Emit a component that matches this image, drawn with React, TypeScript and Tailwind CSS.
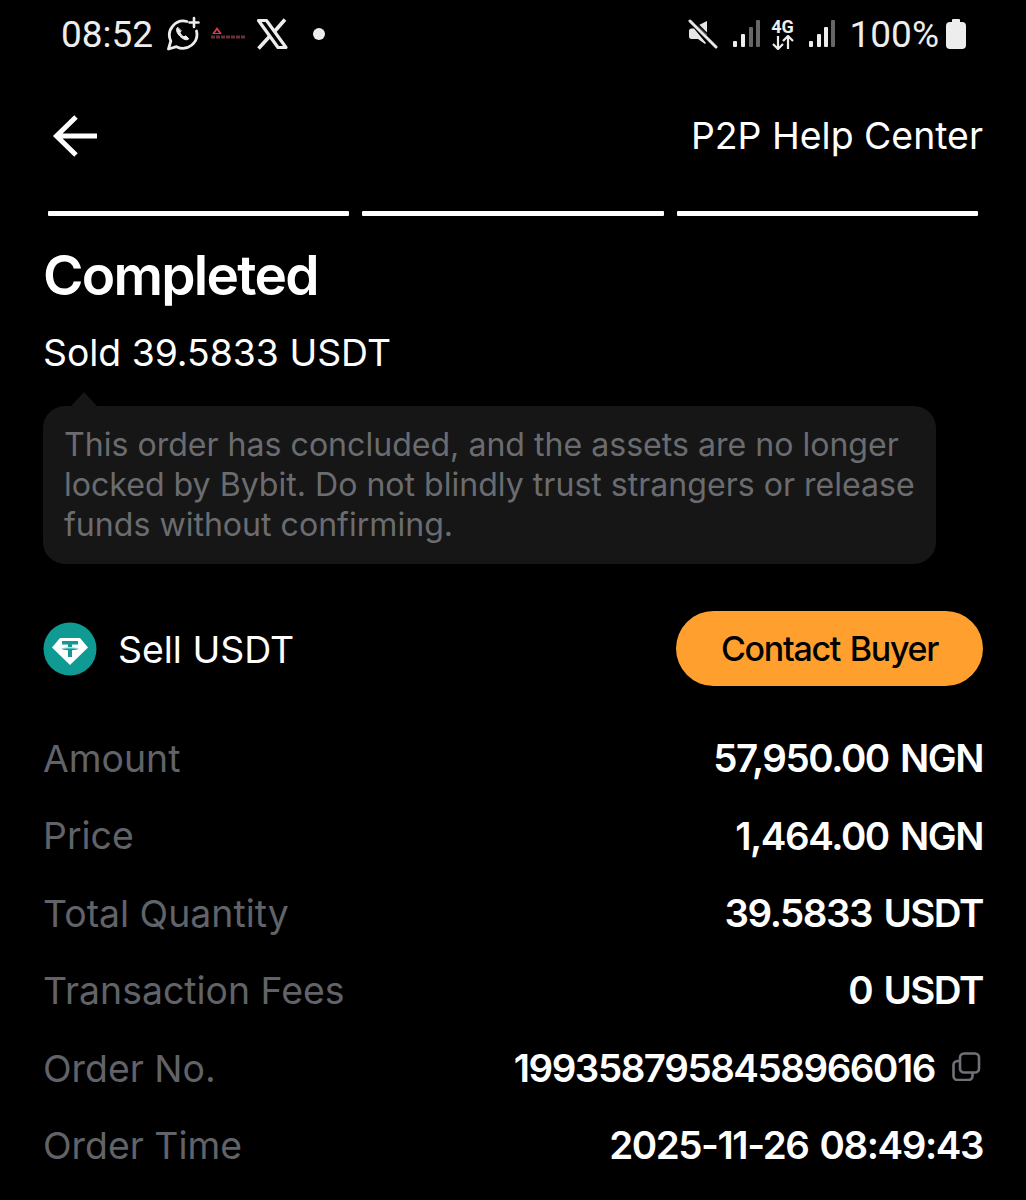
const rows = [
  { label: 'Amount', value: '57,950.00 NGN' },
  { label: 'Price', value: '1,464.00 NGN' },
  { label: 'Total Quantity', value: '39.5833 USDT' },
  { label: 'Transaction Fees', value: '0 USDT' },
  { label: 'Order No.', value: '1993587958458966016', copy: true },
  { label: 'Order Time', value: '2025-11-26 08:49:43' },
];

const WhatsAppIcon = () => (
  <svg width="36" height="36" viewBox="0 0 36 36" fill="none" stroke="#ededed" strokeWidth="2.8" strokeLinecap="round" strokeLinejoin="round">
    <path d="M22 5.500A14 14 0 0 0 5.800 25L3.500 33l8-2.300A14 14 0 0 0 31.500 15" />
    <path d="M12.500 11.500c-2 2-.8 5.500 2.500 8.800s6.800 4.500 8.800 2.500l-3-3-1.800 1c-1.500-.5-3.500-2.500-4-4l1-1.800z" fill="#ededed" strokeWidth="1" />
    <path d="M29 2v9M24.500 6.500h9" strokeWidth="2.600" />
  </svg>
);

const XIcon = () => (
  <svg width="34" height="32" viewBox="0 0 34 32" fill="none" stroke="#ededed" strokeLinejoin="round">
    <path d="M3.500 2.500h8l19.500 27h-8z" strokeWidth="3.200" />
    <path d="M30 1.500 19.500 13.500M14.500 18.500 3.500 30.500" strokeWidth="3.600" />
  </svg>
);

const MutedIcon = () => (
  <svg width="30" height="30" viewBox="0 0 30 30" fill="#e6e6e6">
    <path d="M1 12c0-1.500 1-2.500 2.500-2.500H6L18 24l-1 1-7-5H3.500C2 20 1 19 1 17.500z" />
    <path d="M19 2v14L10 6.500z" />
    <path d="M2 2l26 26" stroke="#e6e6e6" strokeWidth="3" strokeLinecap="round" />
    <path d="M4.500 0 30 25.500" stroke="#000" strokeWidth="1.500" />
  </svg>
);

const SignalIcon = () => (
  <svg width="28" height="30" viewBox="0 0 28 30">
    <rect x="1" y="22" width="4" height="6" rx="1" fill="#ededed" />
    <rect x="9" y="15" width="4" height="13" rx="1" fill="#ededed" />
    <rect x="17" y="8" width="4" height="20" rx="1" fill="#666" />
    <rect x="24" y="1" width="4" height="27" rx="1" fill="#666" />
  </svg>
);

const Signal2Icon = () => (
  <svg width="26" height="30" viewBox="0 0 26 30">
    <rect x="0" y="22" width="4" height="6" rx="1" fill="#ededed" />
    <rect x="8" y="15" width="4" height="13" rx="1" fill="#ededed" />
    <rect x="15" y="8" width="4" height="20" rx="1" fill="#ededed" />
    <rect x="22" y="1" width="4" height="27" rx="1" fill="#666" />
  </svg>
);

const BatteryIcon = () => (
  <svg width="22" height="30" viewBox="0 0 22 30" fill="#ededed">
    <rect x="7" y="0" width="8" height="4" rx="1" />
    <rect x="1" y="3" width="20" height="27" rx="4" />
  </svg>
);

const TetherIcon = () => (
  <svg width="54" height="54" viewBox="0 0 54 54">
    <circle cx="27" cy="27" r="26.500" fill="#0f9b93" />
    <path d="M17 16h20l8 9.500L27 43 9 25.500z" fill="#fff" />
    <path d="M19 19h16v3.500h-6v2.700c3 .1 5.500.6 7 1.500-1.500.9-4 1.400-7 1.500V35h-4v-6.800c-3-.1-5.500-.6-7-1.500 1.500-.9 4-1.400 7-1.500v-2.700h-6z" fill="#0f9b93" />
    <path d="M15 27c3-1.600 21-1.600 24 0" stroke="#fff" strokeWidth="1" fill="none" />
  </svg>
);

const CopyIcon = () => (
  <svg width="30" height="30" viewBox="0 0 30 30" fill="none" stroke="#6f7177" strokeWidth="2.600" strokeLinejoin="round">
    <rect x="9" y="2.500" width="19" height="19" rx="4" />
    <path d="M9 10H6.500a4 4 0 0 0-4 4v11a4 4 0 0 0 4 4h11a4 4 0 0 0 4-4v-3.500" />
  </svg>
);

export default function App() {
  return (
    <div className="w-[1026px] h-[1200px] overflow-hidden bg-black text-white font-['Inter',sans-serif]">
      {/* status bar */}
      <div className="flex items-center justify-between pl-[61px] pr-[59px] py-[5px] h-[68px]">
        <div className="flex items-center">
          <span className="text-[37px] leading-none text-[#ededed] font-['Roboto',sans-serif] w-[92px]">08:52</span>
          <span className="ml-[12px] flex"><WhatsAppIcon /></span>
          <span className="ml-[9px] mr-[9px] flex flex-col items-center w-[36px]">
            <svg width="36" height="16" viewBox="0 0 36 16">
              <path d="M7 1l5 7H2zM7 4l-2 3h4z" fill="#d8384a" fillRule="evenodd" />
              <path d="M1 11h34" stroke="#6a3038" strokeWidth="3" strokeDasharray="4 1" />
            </svg>
          </span>
          <XIcon />
          <span className="ml-[24px] w-[12px] h-[12px] rounded-full bg-[#ededed]" />
        </div>
        <div className="flex items-center">
          <MutedIcon />
          <span className="ml-[14px] flex"><SignalIcon /></span>
          <span className="ml-[9px] w-[28px] flex flex-col items-center">
            <span className="text-[18px] leading-[17px] font-bold text-[#ededed] font-['Roboto',sans-serif]">4G</span>
            <svg width="24" height="15" viewBox="0 0 24 15" fill="none" stroke="#ededed" strokeWidth="2.200">
              <path d="M7 1v13M2 9l5 5 5-5M17 14V1M12 6l5-5 5 5" />
            </svg>
          </span>
          <span className="ml-[12px] flex"><Signal2Icon /></span>
          <span className="ml-[15px] text-[37px] leading-none text-[#ededed] font-['Roboto',sans-serif]">100%</span>
          <span className="ml-[6px] flex"><BatteryIcon /></span>
        </div>
      </div>

      {/* header */}
      <div className="flex items-start justify-between h-[143px] pl-[52px] pr-[43px] pt-[45px]">
        <svg width="46" height="46" viewBox="0 0 46 46" fill="none" stroke="#fff" strokeWidth="5">
          <path d="M45 23H5M24 4 4.500 23 24 42" />
        </svg>
        <span className="text-[37.400px] leading-[46px]">P2P Help Center</span>
      </div>

      {/* progress */}
      <div className="flex gap-[13px] px-[48px]">
        <div className="w-[301px] h-[5px] bg-white rounded-[1px]" />
        <div className="w-[302px] h-[5px] bg-white rounded-[1px]" />
        <div className="w-[301px] h-[5px] bg-white rounded-[1px]" />
      </div>

      <div className="px-[43px]">
        <h1 className="mt-[28px] text-[55px] leading-[62px] font-semibold tracking-[-1.750px]">Completed</h1>
        <p className="mt-[25px] text-[37.300px] leading-[44px]">Sold 39.5833 USDT</p>

        <div className="relative mt-[31px] w-[893px] h-[158px] rounded-[22px] bg-[#161616] pl-[21px] pr-[20px] pt-[19px] text-[32.080px] leading-[40px] text-[#6b6c70]">
          <span className="absolute left-[28px] -top-[14px] w-0 h-0 border-l-[13px] border-r-[13px] border-b-[14px] border-l-transparent border-r-transparent border-b-[#161616]" />
          This order has concluded, and the assets are no longer locked by Bybit. Do not blindly trust strangers or release funds without confirming.
        </div>

        <div className="mt-[46px] flex items-center justify-between h-[76px]">
          <div className="flex items-center gap-[21px] pt-[2px]">
            <TetherIcon />
            <span className="text-[37.400px] leading-[46px] pt-[2px]">Sell USDT</span>
          </div>
          <button className="h-[75px] w-[307px] rounded-full bg-[#ffa02e] text-black text-[34px] font-medium tracking-[-1.300px] [word-spacing:2px]">Contact Buyer</button>
        </div>

        <div className="mt-[51px] flex flex-col gap-[33.400px]">
          {rows.map(row => (
            <div key={row.label} className="flex items-center justify-between h-[44px]">
              <span className="text-[37.400px] text-[#616369]">{row.label}</span>
              <span className="flex items-center text-[38.500px] font-semibold tracking-[-1.450px] [word-spacing:3px]">
                {row.value}
                {row.copy && <span className="flex ml-[16px] mr-[2px] -mt-[5px]"><CopyIcon /></span>}
              </span>
            </div>
          ))}
        </div>
      </div>
    </div>
  );
}
